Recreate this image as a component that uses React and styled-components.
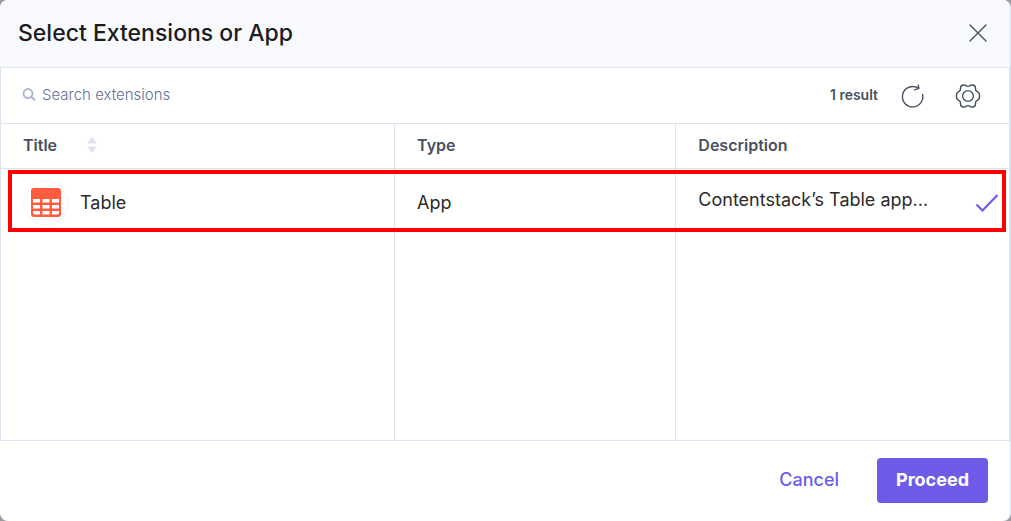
import React from "react";
import styled, { createGlobalStyle } from "styled-components";

const GlobalStyle = createGlobalStyle`
  *, *::before, *::after { box-sizing: border-box; }
  body {
    margin: 0;
    background: #9a9aa0;
    font-family: Inter, "Liberation Sans", sans-serif;
    color: #2b2b2b;
  }
  button, input { font: inherit; color: inherit; }
`;

const line = "#dde3ee";

const Dialog = styled.section`
  display: flex;
  flex-direction: column;
  min-height: 100vh;
  border-radius: 8px;
  overflow: hidden;
  background: #fff;
  border-right: 1px solid ${line};
`;

const Header = styled.header`
  display: flex;
  align-items: center;
  justify-content: space-between;
  height: 67px;
  padding: 0 20px 2px 18px;
  background: #f7f9fc;
`;

const Heading = styled.h1`
  margin: 0;
  font-size: 23px;
  line-height: 28px;
  font-weight: 500;
  color: #1c1c1c;
`;

const IconButton = styled.button`
  display: flex;
  padding: 0;
  border: 0;
  background: none;
  color: #475161;
  cursor: pointer;
`;

const Panel = styled.div`
  flex: 1;
  display: flex;
  flex-direction: column;
  border: 1px solid ${line};
`;

const Toolbar = styled.div`
  display: flex;
  align-items: center;
  height: 56px;
  padding: 0 27px 0 20px;
  border-bottom: 1px solid ${line};
`;

const Search = styled.label`
  flex: 1;
  display: flex;
  align-items: center;
  gap: 6px;
  padding-bottom: 2px;
  color: #a9b6cb;
`;

const SearchInput = styled.input`
  flex: 1;
  min-width: 0;
  padding: 0;
  border: 0;
  outline: 0;
  background: none;
  font-size: 15px;
  line-height: 20px;
  font-weight: 300;
  color: #475161;
  &::placeholder { color: #5f7096; opacity: 1; }
`;

const Count = styled.span`
  margin-right: 20px;
  padding-bottom: 2px;
  font-size: 14px;
  line-height: 20px;
  font-weight: 600;
  color: #475161;
`;

const Actions = styled.div`
  display: flex;
  align-items: center;
  gap: 28px;
`;

const TableArea = styled.div`
  flex: 1;
  display: grid;
`;

const Table = styled.table`
  width: 100%;
  height: 100%;
  table-layout: fixed;
  border-collapse: separate;
  border-spacing: 0;
`;

const Column = styled.col`
  width: ${(p) => p.$share};
`;

const HeadCell = styled.th`
  height: 45px;
  padding: 0 22px 2px;
  border-bottom: 1px solid ${line};
  text-align: left;
  font-size: 16px;
  line-height: 20px;
  font-weight: 600;
  color: #475161;
  & + & { border-left: 1px solid ${line}; }
`;

const Inline = styled.div`
  display: flex;
  align-items: center;
  gap: ${(p) => p.$gap};
`;

const SelectedRow = styled.tr`
  position: relative;
`;

const Cell = styled.td`
  height: ${(p) => (p.$filler ? "auto" : "66px")};
  padding: ${(p) => (p.$filler ? "0" : "2px 22px 0")};
  font-size: 18px;
  line-height: 24px;
  & + & { border-left: 1px solid ${line}; }
`;

const Frame = styled.span`
  position: absolute;
  inset: 1px 3px 3px 7px;
  border: 4px solid #f00;
  pointer-events: none;
`;

const AppBadge = styled.span`
  display: flex;
  align-items: center;
  justify-content: center;
  width: 46px;
  height: 46px;
  border: 2px solid #f7f9fc;
  border-radius: 50%;
`;

const Description = styled.div`
  display: flex;
  align-items: center;
  justify-content: space-between;
  margin-right: -12px;
`;

const Summary = styled.span`
  padding-bottom: 6px;
`;

const Footer = styled.footer`
  display: flex;
  align-items: center;
  justify-content: flex-end;
  gap: 18px;
  height: 80px;
  padding: 0 22px 2px;
`;

const Button = styled.button`
  height: 45px;
  padding: 0 ${(p) => (p.$primary ? "19px" : "20px")};
  border: 0;
  border-radius: 4px;
  background: ${(p) => (p.$primary ? "#6c5ce7" : "none")};
  color: ${(p) => (p.$primary ? "#fff" : "#6c5ce7")};
  font-size: 18px;
  line-height: 24px;
  font-weight: ${(p) => (p.$primary ? 700 : 500)};
  cursor: pointer;
`;

const CloseIcon = () => (
  <svg width="24" height="24" viewBox="0 0 24 24" fill="none" stroke="currentColor" strokeWidth="1.4" strokeLinecap="round">
    <path d="M4 4l16 16M20 4L4 20" />
  </svg>
);

const SearchIcon = () => (
  <svg width="15" height="15" viewBox="0 0 15 15" fill="none" stroke="currentColor" strokeWidth="1.9" strokeLinecap="round">
    <circle cx="7" cy="6.500" r="4.500" />
    <path d="M10.400 10l3 2.800" />
  </svg>
);

const RefreshIcon = () => (
  <svg width="28" height="28" viewBox="0 0 28 28" fill="none" stroke="currentColor" strokeWidth="1.4" strokeLinecap="round" strokeLinejoin="round">
    <path d="M24.600 12.500A10.200 10.200 0 1 1 17.500 4.900L20.500 6" />
    <path d="M20.300 3.200l.5 3.100-4.200 1.500" />
  </svg>
);

const GearIcon = () => (
  <svg width="28" height="28" viewBox="0 0 28 28" fill="none" stroke="currentColor" strokeWidth="1.4" strokeLinejoin="round">
    <path d="M14 4.400C15.700 4.400 16.200 3 18 3H18.800C20.600 3.300 21.600 4.800 21.500 6.500C21.400 8.400 21.800 9.200 23.400 9.700C25 10.300 25.600 11.600 25.600 14C25.600 16.400 25 17.700 23.400 18.300C21.800 18.800 21.400 19.600 21.500 21.500C21.600 23.200 20.600 24.700 18.800 25H18C16.200 25 15.700 23.600 14 23.600C12.300 23.600 11.800 25 10 25H9.200C7.400 24.700 6.400 23.200 6.500 21.500C6.600 19.600 6.200 18.800 4.600 18.300C3 17.700 2.400 16.400 2.400 14C2.400 11.600 3 10.300 4.600 9.700C6.200 9.200 6.600 8.400 6.500 6.500C6.400 4.800 7.400 3.300 9.200 3H10C11.800 3 12.300 4.400 14 4.400Z" />
    <circle cx="14" cy="14" r="5.400" />
  </svg>
);

const SortIcon = () => (
  <svg width="10" height="16" viewBox="0 0 10 16" fill="#dde3ee">
    <path d="M5 0l5 6.500H0zM5 16l5-6.500H0z" />
  </svg>
);

const TableIcon = () => (
  <svg width="30" height="30" viewBox="0 0 30 30">
    <rect width="30" height="29" rx="3" fill="#ff5d3e" />
    <g fill="#fff">
      <path d="M2 11h7v3.500H2zM11.500 11h7v3.500h-7zM21 11h7v3.500h-7z" />
      <path d="M2 17h7v3.500H2zM11.500 17h7v3.500h-7zM21 17h7v3.500h-7z" />
      <path d="M2 23h7v3.500H4a2 2 0 0 1-2-2zM11.500 23h7v3.500h-7zM21 23h7v1.500a2 2 0 0 1-2 2h-5z" />
    </g>
  </svg>
);

const CheckIcon = () => (
  <svg width="24" height="24" viewBox="0 0 24 24" fill="none" stroke="#6c5ce7" strokeWidth="2.200">
    <path d="M1.500 13.500l6 6L22.500 4" />
  </svg>
);

export default function App() {
  return (
    <>
      <GlobalStyle />
      <Dialog role="dialog" aria-labelledby="dialog-title">
        <Header>
          <Heading id="dialog-title">Select Extensions or App</Heading>
          <IconButton aria-label="Close"><CloseIcon /></IconButton>
        </Header>
        <Panel>
          <Toolbar>
            <Search>
              <SearchIcon />
              <SearchInput type="text" aria-label="Search extensions" placeholder="Search extensions" />
            </Search>
            <Count>1 result</Count>
            <Actions>
              <IconButton aria-label="Refresh"><RefreshIcon /></IconButton>
              <IconButton aria-label="Settings"><GearIcon /></IconButton>
            </Actions>
          </Toolbar>
          <TableArea>
            <Table>
              <colgroup>
                <Column $share="39%" />
                <Column $share="27.9%" />
                <Column $share="33.1%" />
              </colgroup>
              <thead>
                <tr>
                  <HeadCell><Inline $gap="30px">Title <SortIcon /></Inline></HeadCell>
                  <HeadCell>Type</HeadCell>
                  <HeadCell>Description</HeadCell>
                </tr>
              </thead>
              <tbody>
                <SelectedRow>
                  <Cell>
                    <Inline $gap="11px">
                      <AppBadge><TableIcon /></AppBadge>
                      Table
                    </Inline>
                    <Frame />
                  </Cell>
                  <Cell>App</Cell>
                  <Cell>
                    <Description>
                      <Summary>Contentstack’s Table app...</Summary>
                      <CheckIcon />
                    </Description>
                  </Cell>
                </SelectedRow>
                <tr aria-hidden="true">
                  <Cell $filler />
                  <Cell $filler />
                  <Cell $filler />
                </tr>
              </tbody>
            </Table>
          </TableArea>
        </Panel>
        <Footer>
          <Button type="button">Cancel</Button>
          <Button type="button" $primary>Proceed</Button>
        </Footer>
      </Dialog>
    </>
  );
}
